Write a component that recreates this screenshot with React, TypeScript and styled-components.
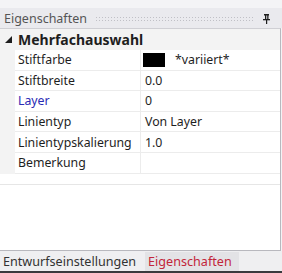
import React from "react";
import styled, { createGlobalStyle } from "styled-components";

const Global = createGlobalStyle`
  html, body { margin: 0; padding: 0; background: #eeeef2; }
  body { font-family: "Noto Sans", "Open Sans", sans-serif; }
`;

const Frame = styled.div`
  width: 282px;
  height: 273px;
  display: flex;
  flex-direction: column;
  background: #f3f3f5;
  overflow: hidden;
`;

const TopGap = styled.div`
  height: 8px;
  background: #f4f4f6;
`;

const TitleBar = styled.div`
  height: 20px;
  display: flex;
  align-items: center;
  padding: 0 12px 0 4px;
  gap: 8px;
  background: #eaeaee;
  font-size: 12.5px;
  color: #555;
`;

const Dots = styled.div`
  flex: 1;
  height: 5px;
  background-image: radial-gradient(#c0c0c6 0.8px, transparent 0.9px);
  background-size: 3px 3px;
`;

const Panel = styled.div`
  flex: 1;
  display: flex;
  flex-direction: column;
  background: #fff;
  border-top: 1px solid #cfcfd4;
  border-right: 1px solid #b8b8be;
  border-bottom: 1px solid #b8b8be;
  margin-right: 1px;
`;

const Category = styled.div`
  height: 21px;
  display: flex;
  align-items: center;
  background: #f3f3f3;
  font-weight: 700;
  font-size: 14px;
  color: #1e1e1e;
  gap: 6px;
  padding-left: 5px;
`;

const Row = styled.div`
  display: grid;
  grid-template-columns: 15px 126px 1fr;
  height: 20.6px;
  font-size: 12.3px;
  color: #1e1e1e;
`;

const Gutter = styled.div`
  background: #f3f3f3;
`;

const Name = styled.div<{ $link?: boolean }>`
  display: flex;
  align-items: center;
  padding-left: 3px;
  border-bottom: 1px solid #ececec;
  border-right: 1px solid #ececec;
  color: ${(p) => (p.$link ? "#2a2ab4" : "#1e1e1e")};
`;

const Value = styled.div`
  display: flex;
  align-items: center;
  padding-left: 4px;
  gap: 10px;
  border-bottom: 1px solid #ececec;
`;

const Swatch = styled.span`
  width: 22px;
  height: 14px;
  background: #000;
  margin-left: -2px;
`;

const Spacer = styled.div`
  height: 10px;
  border-bottom: 1px solid #e6e6e6;
`;

const Help = styled.div`
  flex: 1;
`;

const Tabs = styled.div`
  height: 19px;
  display: flex;
  background: #efeff1;
  font-size: 12.6px;
  padding-top: 1px;
`;

const Tab = styled.div<{ $active?: boolean }>`
  display: flex;
  align-items: center;
  padding: 0 7px 0 3px;
  color: ${(p) => (p.$active ? "#c2253a" : "#333")};
  background: ${(p) => (p.$active ? "#e3e3e6" : "transparent")};
  margin-left: ${(p) => (p.$active ? "2px" : "0")};
`;

const BottomBar = styled.div`
  height: 2px;
  background: #3a3a3e;
`;

const Pin = () => (
  <svg width="7" height="11" viewBox="0 0 7 11">
    <rect x="1" y="1" width="5" height="1.5" fill="#1e1e1e" />
    <rect x="2" y="1" width="1.3" height="6" fill="#1e1e1e" />
    <rect x="4.2" y="1" width="1.3" height="6" fill="#1e1e1e" />
    <rect x="0" y="6" width="7" height="1.3" fill="#1e1e1e" />
    <rect x="3" y="7" width="1.2" height="4" fill="#1e1e1e" />
  </svg>
);

const Triangle = () => (
  <svg width="7" height="7" viewBox="0 0 7 7">
    <polygon points="7,0 7,7 0,7" fill="#1e1e1e" />
  </svg>
);

const rows: { name: string; value?: string; link?: boolean; swatch?: boolean }[] = [
  { name: "Stiftfarbe", value: "*variiert*", swatch: true },
  { name: "Stiftbreite", value: "0.0" },
  { name: "Layer", value: "0", link: true },
  { name: "Linientyp", value: "Von Layer" },
  { name: "Linientypskalierung", value: "1.0" },
  { name: "Bemerkung", value: "" },
];

export default function App() {
  return (
    <Frame>
      <Global />
      <TopGap />
      <TitleBar>
        <span>Eigenschaften</span>
        <Dots />
        <Pin />
      </TitleBar>
      <Panel>
        <Category>
          <Triangle />
          <span>Mehrfachauswahl</span>
        </Category>
        {rows.map((r) => (
          <Row key={r.name}>
            <Gutter />
            <Name $link={r.link}>{r.name}</Name>
            <Value>
              {r.swatch && <Swatch />}
              <span>{r.value}</span>
            </Value>
          </Row>
        ))}
        <Spacer />
        <Help />
      </Panel>
      <Tabs>
        <Tab>Entwurfseinstellungen</Tab>
        <Tab $active>Eigenschaften</Tab>
      </Tabs>
      <BottomBar />
    </Frame>
  );
}
